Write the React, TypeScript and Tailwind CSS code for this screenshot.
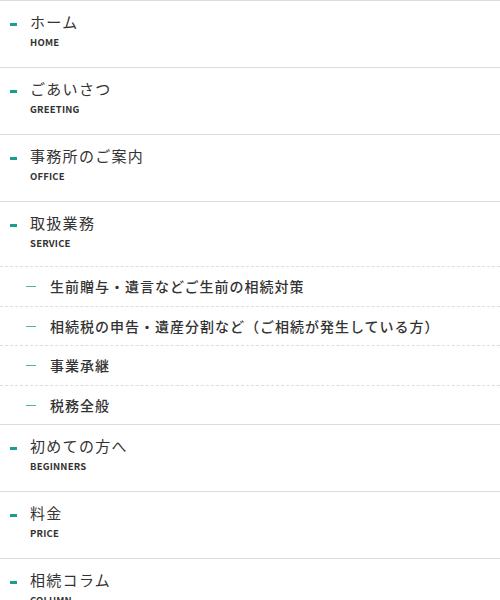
const mainBefore = [
  { ja: "ホーム", en: "HOME" },
  { ja: "ごあいさつ", en: "GREETING" },
  { ja: "事務所のご案内", en: "OFFICE" },
];

const services = [
  "生前贈与・遺言などご生前の相続対策",
  "相続税の申告・遺産分割など（ご相続が発生している方）",
  "事業承継",
  "税務全般",
];

const mainAfter = [
  { ja: "初めての方へ", en: "BEGINNERS" },
  { ja: "料金", en: "PRICE" },
  { ja: "相続コラム", en: "COLUMN" },
];

function MainItem({ ja, en, short }: { ja: string; en: string; short?: boolean }) {
  return (
    <li className="border-t border-[#dcdcdc]">
      <a
        href="#"
        className={`flex flex-col pt-[11px] pl-[30px] relative ${short ? "h-[64px]" : "h-[66px]"}`}
      >
        <span className="absolute left-[10px] top-[22px] h-[3px] w-[7px] bg-[#1a9e8e]" />
        <span className="text-[15px] leading-[20px] tracking-[1.3px] text-[#333]">{ja}</span>
        <span className="mt-[3px] text-[9.5px] leading-[14px] font-bold tracking-[0.2px] text-[#333]">{en}</span>
      </a>
    </li>
  );
}

export default function App() {
  return (
    <nav
      className="w-[500px] h-[600px] overflow-hidden bg-white"
      style={{ fontFamily: '"Noto Sans CJK JP", "Noto Sans", sans-serif' }}
    >
      <ul>
        {mainBefore.map((m) => (
          <MainItem key={m.en} {...m} />
        ))}
        <MainItem ja="取扱業務" en="SERVICE" short />
        {services.map((s, i) => (
          <li key={s} className="border-t border-dashed border-[#dedede]">
            <a
              href="#"
              className={`flex items-center pl-[26px] gap-[14px] ${i % 2 === 0 ? "h-[39px]" : "h-[38px]"}`}
            >
              <span className="h-px w-[10px] bg-[#4fb3a8]" />
              <span className="text-[14px] tracking-[1px] font-medium text-[#333]">{s}</span>
            </a>
          </li>
        ))}
        {mainAfter.map((m) => (
          <MainItem key={m.en} {...m} />
        ))}
      </ul>
    </nav>
  );
}
